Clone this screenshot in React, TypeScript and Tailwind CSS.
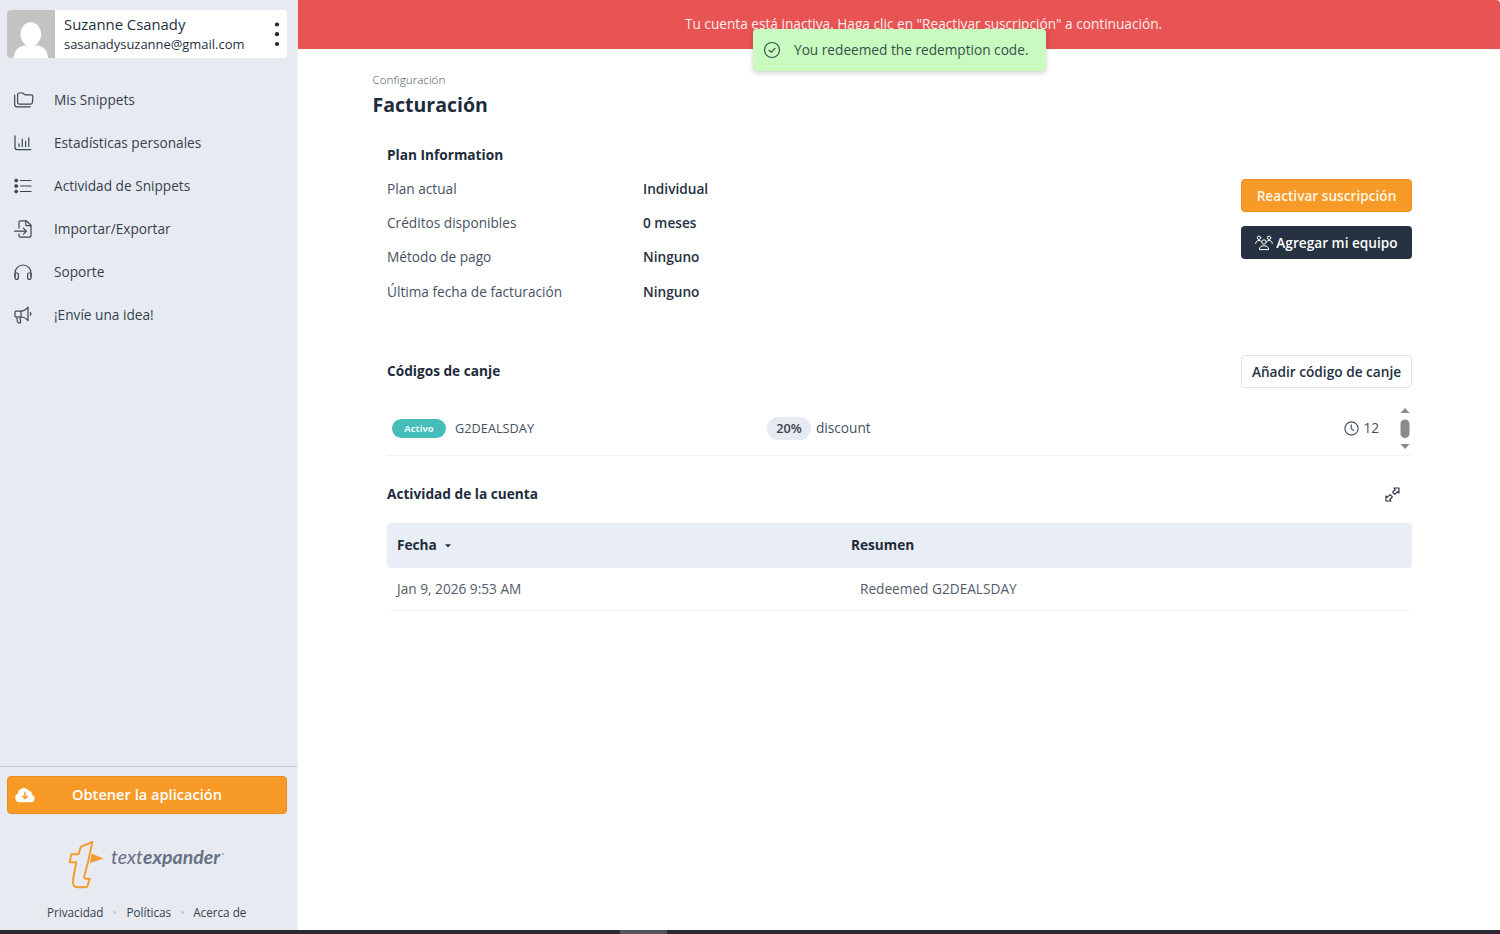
import type { ReactNode } from "react";

const stroke = {
  fill: "none",
  stroke: "currentColor",
  strokeWidth: 1.2,
  strokeLinecap: "round" as const,
  strokeLinejoin: "round" as const,
};

function FoldersIcon() {
  return (
    <svg width="20" height="18" viewBox="0 0 20 18" className="mt-[1px]" {...stroke}>
      <path d="M3.6 4.2V2.6C3.6 1.6 4.3 1 5.2 1h3.6l2.2 1.9h6.2c.9 0 1.7.7 1.7 1.6l-.5 6c-.1 1-.8 1.6-1.7 1.6H5.4c-1 0-1.8-.7-1.8-1.7z" />
      <path d="M.7 3.2v9.3c0 1.400.9 2.300 2.300 2.300h13.200" />
    </svg>
  );
}

function ChartIcon() {
  return (
    <svg width="18" height="16" viewBox="0 0 18 16" {...stroke}>
      <path d="M1 .8v11.800c0 1.200.8 2 2 2h13.800" />
      <path d="M5 11.600V8.800M8.300 11.600V4M11.600 11.600V6M14.800 11.600V2.800" />
    </svg>
  );
}

function ListIcon() {
  return (
    <svg width="18" height="16" viewBox="0 0 18 16" {...stroke}>
      <path d="M6.500 2.500h10.500M6.500 8h10.500M6.500 13.500h10.500" />
      <g fill="currentColor" strokeWidth="0.8">
        <circle cx="2.200" cy="2.500" r="1.500" />
        <circle cx="2.200" cy="8" r="1.500" />
        <circle cx="2.200" cy="13.500" r="1.500" />
      </g>
    </svg>
  );
}

function ImportIcon() {
  return (
    <svg width="18" height="18" viewBox="0 0 18 18" {...stroke}>
      <path d="M5 8V2.200C5 1.400 5.600.8 6.400.8h6L17 5.200v10.600c0 .8-.6 1.400-1.400 1.400H6.400c-.8 0-1.400-.6-1.400-1.400v-1.600" />
      <path d="M11.800 1v3.400c0 .8.500 1.300 1.300 1.300h3.700" />
      <path d="M.7 11.200h11.600M9.400 8.200l3 3-3 3" />
    </svg>
  );
}

function HeadphonesIcon() {
  return (
    <svg width="18" height="17" viewBox="0 0 18 17" {...stroke}>
      <path d="M1 12.500V9a8 8 0 0 1 16 0v3.500" />
      <rect x="1" y="9" width="3.400" height="6.400" rx="1.400" />
      <rect x="13.600" y="9" width="3.400" height="6.400" rx="1.400" />
    </svg>
  );
}

function MegaphoneIcon() {
  return (
    <svg width="18" height="18" viewBox="0 0 18 18" {...stroke}>
      <path d="M1 6.200c0-.6.400-1 1-1h5c3 0 5-1.600 7-4v13.400c-2-2.400-4-3.600-7-3.600H2c-.6 0-1-.4-1-1z" />
      <path d="M7 5.300V11M2.700 11l.9 5c.1.600.5.900 1 .9h1c.7 0 1.100-.6 1-1.200L5.900 11.200M16.300 6.700c.6.700.6 1.900 0 2.600" />
    </svg>
  );
}

const navItems: { label: string; icon: ReactNode }[] = [
  { label: "Mis Snippets", icon: <FoldersIcon /> },
  { label: "Estadísticas personales", icon: <ChartIcon /> },
  { label: "Actividad de Snippets", icon: <ListIcon /> },
  { label: "Importar/Exportar", icon: <ImportIcon /> },
  { label: "Soporte", icon: <HeadphonesIcon /> },
  { label: "¡Envíe una idea!", icon: <MegaphoneIcon /> },
];

function Profile() {
  return (
    <div className="mx-[7px] mt-[10px] flex h-12 w-[280px] shrink-0 overflow-hidden rounded-[4px] bg-white">
      <svg width="48" height="48" viewBox="0 0 48 48" className="shrink-0">
        <rect width="48" height="48" fill="#c3c3c3" />
        <ellipse cx="23.800" cy="24.300" rx="10.300" ry="12" fill="#fff" />
        <path d="M6.500 48c.5-7 4.500-11.500 11-12.500h13c6.500 1 10 5.500 10.500 12.500z" fill="#fff" />
      </svg>
      <div className="flex flex-1 flex-col pl-[9px] pt-[4px] text-[#25303f]">
        <span className="text-[14.85px] leading-5">Suzanne Csanady</span>
        <span className="pt-[1px] text-[12.95px] leading-[19px]">sasanadysuzanne@gmail.com</span>
      </div>
      <svg width="20" height="48" viewBox="0 0 20 48" fill="#1f2937">
        <circle cx="10" cy="14.500" r="2.100" />
        <circle cx="10" cy="24.200" r="2.100" />
        <circle cx="10" cy="34" r="2.100" />
      </svg>
    </div>
  );
}

function Logo() {
  return (
    <div className="ml-[68px] mt-[26px] flex h-[50px] items-start">
      <svg width="36" height="50" viewBox="0 0 36 50">
        <path
          d="M12.900 6.600L24.300 2 20.200 21.500 16.200 36.500c-.3 1.600.3 2.200 1.800 2.200h3.700L19.500 46c-.3 1-.9 1.300-1.800 1.300h-7.500C6 47.300 4.200 44.500 5 40L8.200 22.300H1.700L3.200 14.300h7.300z"
          fill="none"
          stroke="#f59a2c"
          strokeWidth="1.900"
          strokeLinejoin="round"
        />
        <path d="M23.600 13.500L35.500 18.500 22.200 23z" fill="#f59a2c" />
      </svg>
      <span className="ml-[7px] mt-[5px] font-['Lato',sans-serif] text-[19.5px] leading-6 italic text-[#667085]">
        text<b className="font-bold">expander</b>
      </span>
      <span className="ml-[2px] mt-[13px] size-[2px] rounded-full bg-[#a3abb9]" />
    </div>
  );
}

function Sidebar() {
  return (
    <aside className="flex w-[298px] shrink-0 flex-col border-r border-[#eceff4] bg-[#e7ebf1]">
      <Profile />
      <nav className="mt-5 flex flex-1 flex-col">
        {navItems.map((item) => (
          <a key={item.label} className="flex h-[43px] items-center text-[13.67px] text-[#36414f]">
            <span className="ml-[14px] flex w-10 items-center pt-[1px] text-[#3a4554]">{item.icon}</span>
            <span className="pt-[1px]">{item.label}</span>
          </a>
        ))}
      </nav>
      <div className="flex h-[164px] shrink-0 flex-col border-t border-[#c5cad3] pt-[9px]">
        <button className="ml-[7px] flex h-[38px] w-[280px] shrink-0 items-center rounded-[4px] border border-[#ee8b1c] bg-[#f79a28] text-white">
          <svg width="22" height="16" viewBox="0 0 22 16" className="ml-[6px]">
            <path d="M5.500 15.200A4.600 4.600 0 0 1 4 6.400 5.900 5.900 0 0 1 14.700 3.500 3.800 3.800 0 0 1 18 8a3.700 3.700 0 0 1-.8 7.200z" fill="#fff" />
            <path d="M11 5.200v6M8.300 8.800l2.700 2.700 2.700-2.700" fill="none" stroke="#f79a28" strokeWidth="1.500" />
          </svg>
          <span className="ml-9 text-[14.63px] font-semibold">Obtener la aplicación</span>
        </button>
        <Logo />
        <div className="ml-[47px] mt-[13px] flex items-center text-[11.7px] leading-[18px] text-[#36414f]">
          <span>Privacidad</span>
          <i className="mx-[10px] size-[3px] rounded-full bg-[#c3c9d4]" />
          <span>Políticas</span>
          <i className="mx-[9.500px] size-[3px] rounded-full bg-[#c3c9d4]" />
          <span>Acerca de</span>
        </div>
      </div>
    </aside>
  );
}

function Toast() {
  return (
    <div className="absolute left-[753px] top-[29px] flex h-[42px] w-[293px] items-center rounded-[4px] bg-[#c9fbc0] text-[13.67px] text-[#36514a] shadow-[0_2px_5px_rgba(0,0,0,0.2)]">
      <svg width="18" height="18" viewBox="0 0 18 18" className="ml-[10px]" {...stroke}>
        <circle cx="9" cy="9" r="7.500" />
        <path d="M6 9.300l2.200 2 3.800-4" />
      </svg>
      <span className="ml-[13px]">You redeemed the redemption code.</span>
    </div>
  );
}

const planRows = [
  ["Plan actual", "Individual"],
  ["Créditos disponibles", "0 meses"],
  ["Método de pago", "Ninguno"],
  ["Última fecha de facturación", "Ninguno"],
];

function PlanSection() {
  return (
    <section className="mt-[25px] flex h-[168px] justify-between">
      <div>
        <h2 className="h-[34px] text-[13.67px] leading-[24px] font-bold text-[#1d2b3a]">Plan Information</h2>
        {planRows.map(([label, value]) => (
          <div key={label} className="flex h-[34.200px] text-[13.67px] leading-6">
            <span className="w-64 text-[#46515f]">{label}</span>
            <span className="font-semibold text-[#25303f]">{value}</span>
          </div>
        ))}
      </div>
      <div className="mt-9 flex w-[171px] flex-col gap-[14px]">
        <button className="h-[33px] rounded-[4px] border border-[#ee8b1c] bg-[#f79a28] pt-[1px] text-[13.67px] font-semibold text-[#fff6e5]">
          Reactivar suscripción
        </button>
        <button className="flex h-[33px] items-center justify-center gap-[3px] rounded-[4px] bg-[#263241] text-[13.67px] font-semibold text-white">
          <svg width="18" height="16" viewBox="0 0 18 16" {...stroke} strokeWidth={1}>
            <circle cx="4" cy="2.800" r="1.700" />
            <circle cx="14" cy="2.800" r="1.700" />
            <circle cx="9" cy="7" r="2.200" />
            <path d="M.7 8.500c.2-2 1.300-3 3.300-3 .8 0 1.400.2 1.900.6M17.300 8.500c-.2-2-1.300-3-3.300-3-.8 0-1.400.2-1.900.6M4.400 14.200c.1-2.300 1.700-3.400 4.600-3.400s4.500 1.100 4.600 3.400z" />
          </svg>
          <span className="pt-[2px]">Agregar mi equipo</span>
        </button>
      </div>
    </section>
  );
}

function CodesSection() {
  return (
    <section className="mt-[44px]">
      <div className="flex h-[33px] items-center justify-between">
        <h2 className="text-[13.67px] font-bold text-[#1d2b3a]">Códigos de canje</h2>
        <button className="h-[33px] w-[171px] rounded-[4px] border border-[#dfe2e7] pt-[1px] text-[13.67px] font-semibold text-[#25303f]">
          Añadir código de canje
        </button>
      </div>
      <div className="mt-[14px] flex h-[54px] border-b border-[#f1f3f5] text-[13.67px] text-[#46515f]">
        <div className="flex h-[53px] w-[375px] items-center pl-[5px]">
          <span className="flex h-[19px] w-[54px] items-center justify-center rounded-full bg-[#45bdb9] pt-[1px] text-[9.4px] font-bold text-[#e9fffc]">
            Activo
          </span>
          <span className="ml-[9px] pt-[1px] text-[12.75px]">G2DEALSDAY</span>
        </div>
        <div className="flex h-[53px] flex-1 items-center pl-[5px]">
          <span className="flex h-[23px] w-[44px] items-center justify-center rounded-full bg-[#e6eaf1] pt-[1px] text-[12.7px] font-semibold text-[#36414f]">
            20%
          </span>
          <span className="ml-[5px]">discount</span>
        </div>
        <div className="flex h-[53px] items-center">
          <svg width="15" height="15" viewBox="0 0 15 15" {...stroke}>
            <circle cx="7.500" cy="7.500" r="6.600" />
            <path d="M7.200 3.800v4l2.600 1.400" />
          </svg>
          <span className="ml-1">12</span>
        </div>
        <svg width="14" height="54" viewBox="0 0 14 54" fill="#8b8b8b" className="ml-[19px]">
          <path d="M2.500 11L7 6l4.500 5zM2.500 42L7 47l4.500-5z" />
          <rect x="2.500" y="17.500" width="9" height="18.500" rx="4.500" />
        </svg>
      </div>
    </section>
  );
}

function ActivitySection() {
  return (
    <section className="mt-[26px]">
      <div className="flex h-6 items-center justify-between pr-3">
        <h2 className="text-[13.67px] font-bold text-[#1d2b3a]">Actividad de la cuenta</h2>
        <svg width="15" height="15" viewBox="0 0 15 15" className="text-[#25303f]" {...stroke} strokeWidth={1.1} strokeLinecap="butt">
          <path d="M9 1H14v5l-1.500-1.200-2.600 2.600-2.300-2.300 2.600-2.600zM6 14H1V9l1.500 1.200 2.600-2.600 2.300 2.300-2.600 2.600z" />
        </svg>
      </div>
      <div className="mt-[17px] flex h-[45px] items-center rounded-[4px] bg-[#e9eef6] text-[13.67px] font-bold text-[#1d2b3a]">
        <span className="flex w-[464px] items-center pl-[10px]">
          Fecha
          <svg width="6" height="4" viewBox="0 0 6 4" className="ml-2">
            <path d="M0 .3h6L3 3.500z" fill="currentColor" />
          </svg>
        </span>
        <span>Resumen</span>
      </div>
      <div className="flex h-[43px] items-center border-b border-[#f1f3f5] text-[13.67px] text-[#535c69]">
        <span className="w-[473px] pl-[10px]">Jan 9, 2026 9:53 AM</span>
        <span>Redeemed G2DEALSDAY</span>
      </div>
    </section>
  );
}

export default function App() {
  return (
    <div className="relative flex h-[934px] w-[1500px] flex-col overflow-hidden bg-white font-['Open_Sans',sans-serif]">
      <div className="flex h-[930px]">
        <Sidebar />
        <main className="flex-1">
          <div className="flex h-[49px] items-center justify-center rounded-tr-[4px] bg-[#e85353] pl-[49px] text-[13.67px] text-[#fdeeee]">
            Tu cuenta está inactiva. Haga clic en "Reactivar suscripción" a continuación.
          </div>
          <div className="pl-[74px] pt-[21px]">
            <div className="pl-[0.5px] text-[11.7px] leading-[18px] font-light text-[#46515f]">Configuración</div>
            <h1 className="mt-[3px] pl-[0.5px] text-[19.5px] leading-[27px] font-bold text-[#1d2b3a]">Facturación</h1>
            <div className="ml-[15px] w-[1025px]">
              <PlanSection />
              <CodesSection />
              <ActivitySection />
            </div>
          </div>
        </main>
      </div>
      <div className="flex h-1 bg-[#2d2b31]">
        <span className="ml-[620px] w-[47px] bg-[#55545a]" />
      </div>
      <Toast />
    </div>
  );
}
